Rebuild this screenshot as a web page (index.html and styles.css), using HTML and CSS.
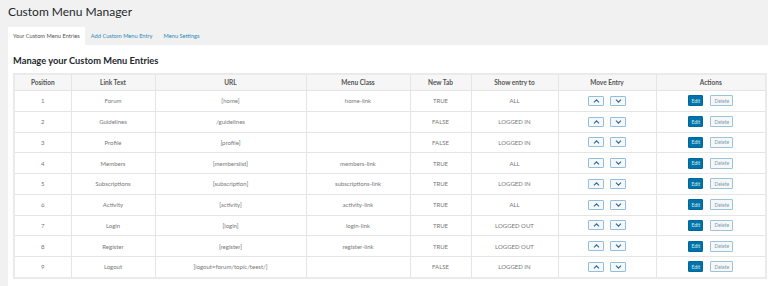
FILE: index.html
```html
<!DOCTYPE html>
<html lang="en">
<head>
    <meta charset="UTF-8">
    <title>Custom Menu Manager</title>
    <link rel="stylesheet" href="styles.css">
</head>
<body>
    <h1 class="page-title">Custom Menu Manager</h1>
    <div class="tabs">
        <a class="tab active">Your Custom Menu Entries</a>
        <a class="tab">Add Custom Menu Entry</a>
        <a class="tab">Menu Settings</a>
    </div>
    <div class="panel">
        <h2>Manage your Custom Menu Entries</h2>
        <table class="entries">
            <colgroup>
                <col style="width:57px">
                <col style="width:84px">
                <col style="width:151px">
                <col style="width:104px">
                <col style="width:61px">
                <col style="width:87px">
                <col style="width:98px">
                <col style="width:110px">
            </colgroup>
            <thead>
                <tr>
                    <th>Position</th>
                    <th>Link Text</th>
                    <th>URL</th>
                    <th>Menu Class</th>
                    <th>New Tab</th>
                    <th>Show entry to</th>
                    <th>Move Entry</th>
                    <th>Actions</th>
                </tr>
            </thead>
            <tbody id="rows"></tbody>
        </table>
    </div>

    <script>
        const entries = [
            [1, "Forum", "[home]", "home-link", "TRUE", "ALL"],
            [2, "Guidelines", "/guidelines", "", "FALSE", "LOGGED IN"],
            [3, "Profile", "[profile]", "", "FALSE", "LOGGED IN"],
            [4, "Members", "[memberslist]", "members-link", "TRUE", "ALL"],
            [5, "Subscriptions", "[subscription]", "subscriptions-link", "TRUE", "LOGGED IN"],
            [6, "Activity", "[activity]", "activity-link", "TRUE", "ALL"],
            [7, "Login", "[login]", "login-link", "TRUE", "LOGGED OUT"],
            [8, "Register", "[register]", "register-link", "TRUE", "LOGGED OUT"],
            [9, "Logout", "[logout=forum/topic/teest/]", "", "FALSE", "LOGGED IN"]
        ];

        const up = '<svg width="7" height="4" viewBox="0 0 7 4"><path d="M1 3.4 3.5 0.9 6 3.4" fill="none" stroke="#2b6c95" stroke-width="1.1"/></svg>';
        const down = '<svg width="7" height="4" viewBox="0 0 7 4"><path d="M1 0.6 3.5 3.1 6 0.6" fill="none" stroke="#2b6c95" stroke-width="1.1"/></svg>';

        const body = document.getElementById("rows");
        entries.forEach(function (e) {
            const tr = document.createElement("tr");
            let html = "";
            e.forEach(function (v) { html += "<td>" + v + "</td>"; });
            html += '<td><button class="move">' + up + '</button><button class="move">' + down + '</button></td>';
            html += '<td><button class="edit">Edit</button><button class="delete">Delete</button></td>';
            tr.innerHTML = html;
            body.appendChild(tr);
        });
    </script>
</body>
</html>
```
FILE: styles.css
```css
body {
    margin: 0;
    background-color: #f1f1f1;
    font-family: Lato, sans-serif;
    color: #666;
    overflow: hidden;
}

.page-title {
    margin: 0;
    padding: 4px 0 0 8px;
    height: 23px;
    font-size: 12px;
    font-weight: 400;
    color: #23282d;
}

.tabs {
    display: flex;
    padding-left: 8px;
    height: 18px;
}

.tab {
    padding: 0 5px;
    margin-right: 1px;
    line-height: 18px;
    font-size: 5.7px;
    color: #2e89b8;
}

.tab.active {
    background-color: #fff;
    color: #555;
}

.panel {
    background-color: #fff;
    margin-left: 8px;
    padding: 1px 3px 20px 5px;
    height: 300px;
}

.panel h2 {
    margin: 9px 0 7px;
    font-size: 9.3px;
    font-weight: 700;
    color: #23282d;
}

.entries {
    border-collapse: collapse;
    table-layout: fixed;
    width: 752px;
    border: 2px solid #eaeaea;
}

.entries th,
.entries td {
    border: 1px solid #e5e5e5;
    text-align: center;
    padding: 0;
    font-size: 6px;
    white-space: nowrap;
    color: #777;
}

.entries th {
    height: 15px;
    background-color: #f6f6f6;
    font-size: 6.5px;
    font-weight: 700;
    color: #555;
}

.entries td {
    height: 19.75px;
}

.move {
    display: inline-flex;
    align-items: center;
    justify-content: center;
    width: 16px;
    height: 10px;
    margin: 0 3px;
    padding: 0;
    background-color: #f5f7f8;
    border: 1px solid #92bfdb;
    border-radius: 1px;
    vertical-align: middle;
}

.edit,
.delete {
    height: 11px;
    padding: 0;
    font-family: Lato, sans-serif;
    font-size: 5px;
    border-radius: 1px;
    vertical-align: middle;
}

.edit {
    width: 15px;
    margin-right: 7px;
    background-color: #0073aa;
    border: 1px solid #006799;
    color: #d8eaf4;
}

.delete {
    width: 23px;
    background-color: #f7f7f7;
    border: 1px solid #9ac3dc;
    color: #7d9cb2;
}
```
